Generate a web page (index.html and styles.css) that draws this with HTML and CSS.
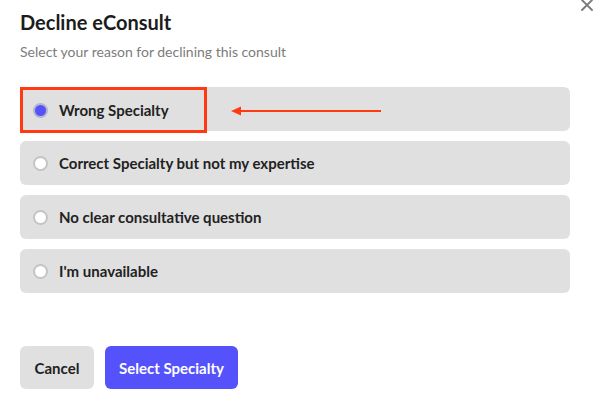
FILE: index.html
```html
<!DOCTYPE html>
<html>
<head>
<meta charset="utf-8">
<link rel="stylesheet" href="styles.css">
</head>
<body>
<div class="dialog">
  <button class="close" aria-label="Close">
    <svg width="14" height="14" viewBox="0 0 14 14"><path d="M2 2 L12 12 M12 2 L2 12" stroke="#7a7a7a" stroke-width="1.8" stroke-linecap="round"/></svg>
  </button>
  <h1 class="title">Decline eConsult</h1>
  <p class="subtitle">Select your reason for declining this consult</p>
  <div class="options">
    <label class="option">
      <span class="hl">
        <span class="radio checked"></span>
        <span class="label">Wrong Specialty</span>
      </span>
      <svg class="arrow" width="152" height="10" viewBox="0 0 152 10"><path d="M8 5 H150" stroke="#ff3a12" stroke-width="2"/><path d="M0 5 L10 0.5 L10 9.5 Z" fill="#ff3a12"/></svg>
    </label>
    <label class="option">
      <span class="radio"></span>
      <span class="label">Correct Specialty but not my expertise</span>
    </label>
    <label class="option">
      <span class="radio"></span>
      <span class="label">No clear consultative question</span>
    </label>
    <label class="option">
      <span class="radio"></span>
      <span class="label">I'm unavailable</span>
    </label>
  </div>
  <div class="actions">
    <button class="btn cancel">Cancel</button>
    <button class="btn primary">Select Specialty</button>
  </div>
</div>
</body>
</html>
```
FILE: styles.css
```css
html, body {
  margin: 0;
  padding: 0;
  background: #ffffff;
}
body {
  font-family: Lato, "Liberation Sans", sans-serif;
  color: #222;
}
.dialog {
  position: relative;
  width: 607px;
  height: 404px;
  padding: 9px 37px 0 20px;
  box-sizing: border-box;
}
.close {
  position: absolute;
  top: -2px;
  right: 13px;
  border: 0;
  background: none;
  padding: 0;
  width: 14px;
  height: 14px;
}
.close svg { display: block; }
.title {
  margin: 0;
  font-size: 20px;
  font-weight: 700;
  line-height: 26px;
  color: #1c1c1c;
}
.subtitle {
  margin: 8px 0 0;
  font-size: 14px;
  line-height: 17px;
  color: #7c7c7c;
}
.options {
  margin-top: 27px;
  display: flex;
  flex-direction: column;
  gap: 10px;
}
.option {
  display: flex;
  align-items: center;
  height: 44px;
  background: #e0e0e0;
  border-radius: 6px;
  padding-left: 13px;
  box-sizing: border-box;
}
.option:first-child {
  padding-left: 0;
  align-items: flex-start;
}
.hl {
  display: flex;
  align-items: center;
  height: 46px;
  width: 187px;
  box-sizing: border-box;
  border: 3px solid #ff3a12;
  padding-left: 10px;
}
.arrow {
  margin-left: 24px;
  margin-top: 19px;
  display: block;
}
.radio {
  width: 15px;
  height: 15px;
  border-radius: 50%;
  background: #fff;
  border: 2px solid #c4c4c4;
  box-sizing: border-box;
  flex: none;
  margin-right: 11px;
}
.radio.checked {
  background: #5552fb;
  border: 2px solid #b4b4cc;
}
.label {
  font-size: 15px;
  font-weight: 700;
  color: #222;
}
.actions {
  margin-top: 53px;
  display: flex;
  gap: 11px;
}
.btn {
  font-family: Lato, "Liberation Sans", sans-serif;
  font-size: 15px;
  font-weight: 700;
  height: 43px;
  border: 0;
  border-radius: 6px;
  padding: 0;
}
.cancel {
  background: #e0e0e0;
  color: #222;
  width: 74px;
}
.primary {
  background: #5552fb;
  color: #fff;
  width: 133px;
}
```
